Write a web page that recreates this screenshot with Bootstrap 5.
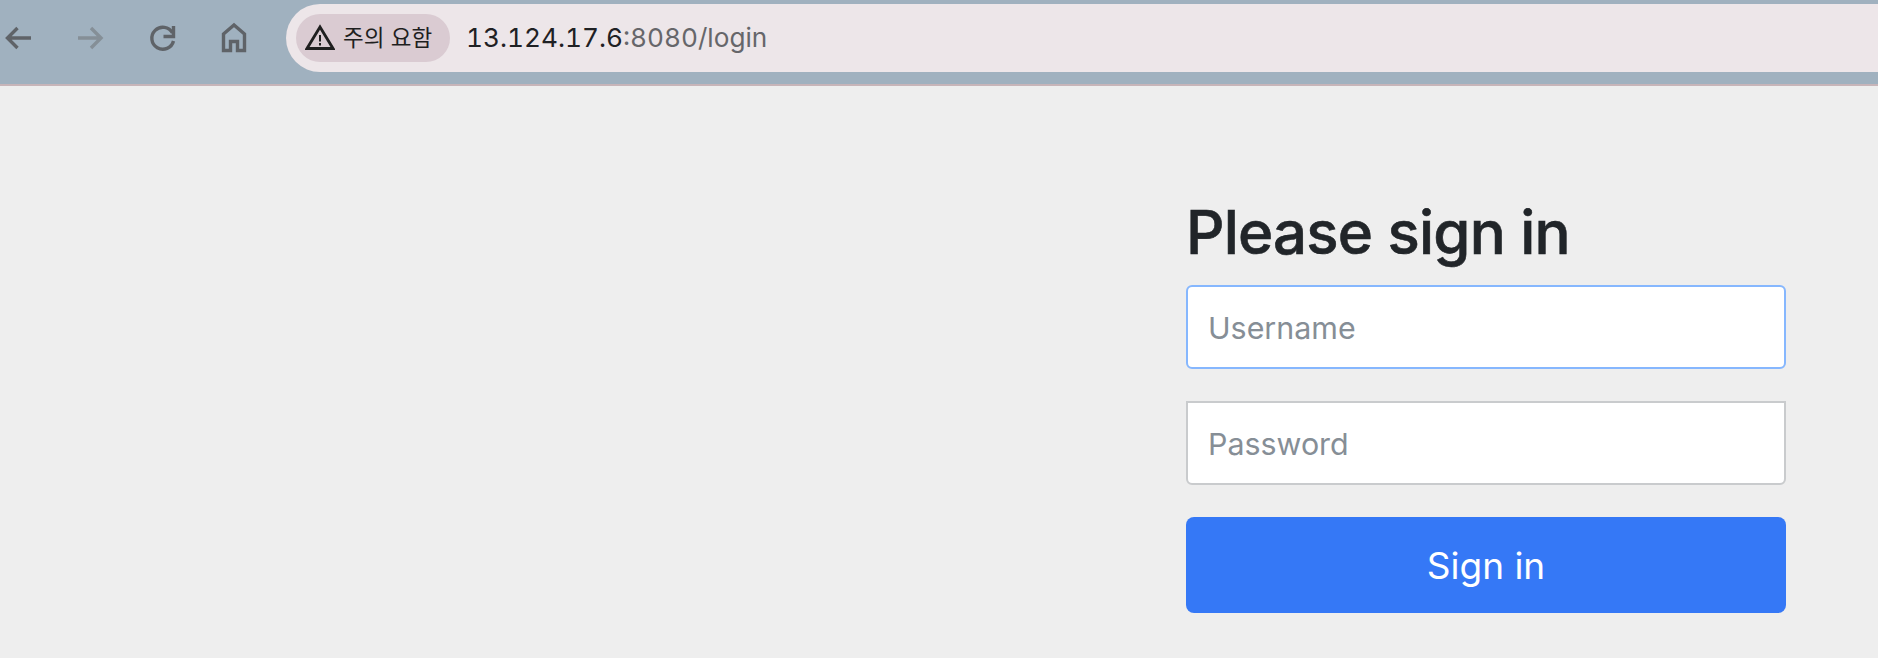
<!DOCTYPE html>
<html lang="ko">
<head>
  <meta charset="UTF-8" />
  <meta name="viewport" content="width=device-width, initial-scale=1" />
  <title>Please sign in</title>
  <link href="https://cdn.jsdelivr.net/npm/bootstrap@5.3.0/dist/css/bootstrap.min.css" rel="stylesheet" />
  <style>
    html, body {
      height: 658px;
      overflow: hidden;
    }

    body {
      background: #eeeeee;
      color: #212529;
      font-family: Inter, "Noto Sans CJK KR", sans-serif;
    }

    .browser-bar {
      height: 86px;
      background: #a0b1bf;
      border-bottom: 2px solid #c7b5b9;
      padding: 4px 0 12px 0;
    }

    .nav-icon {
      width: 32px;
      height: 32px;
      flex: none;
      margin-right: 40px;
      color: #5f6368;
    }

    .nav-icon.is-off {
      color: #858f97;
    }

    .nav-icons {
      padding-left: 3px;
      width: 286px;
      flex: none;
    }

    .address-box {
      background: #ede6e9;
      border-radius: 34px 0 0 34px;
      padding-left: 10px;
    }

    .warn-pill {
      width: 154px;
      height: 48px;
      background: #dacbd2;
      border-radius: 24px;
      padding-left: 9px;
      font-size: 22.5px;
      color: #1f1f1f;
      white-space: nowrap;
    }

    .warn-pill svg {
      flex: none;
      margin-right: 8px;
    }

    .url-text {
      margin-left: 16px;
      font-size: 26.2px;
      font-variant-numeric: tabular-nums;
      color: #66666a;
    }

    .url-host {
      color: #1f2124;
    }

    .login-area {
      padding: 110px 92px 0 0;
    }

    .login-form {
      width: 600px;
    }

    .login-title {
      font-size: 60px;
      font-weight: 500;
      letter-spacing: -0.8px;
      -webkit-text-stroke: 0.6px #212529;
      line-height: 1.2;
      margin: 0 0 17px 0;
    }

    .login-input {
      height: 84px;
      padding: 2px 20px 0 20px;
      font-size: 30.4px;
      border: 2px solid #c9cbcd;
      border-radius: 6px;
      margin-bottom: 32px;
    }

    .login-input.is-active {
      border-color: #86b7fe;
    }

    .login-input.is-lower {
      border-top-left-radius: 0;
      border-top-right-radius: 0;
    }

    .login-input::placeholder {
      color: #868e96;
    }

    .login-btn {
      height: 96px;
      padding-top: 8px;
      font-size: 37px;
      background: #3578f6;
      border: 0;
      border-radius: 8px;
      color: #fff;
    }
  </style>
</head>
<body>
  <div class="browser-bar d-flex">
    <div class="nav-icons d-flex align-items-center">
      <svg class="nav-icon" viewBox="0 0 32 32" fill="none" stroke="currentColor" stroke-width="3.4"><path d="M28 16H5M14.500 6 4.500 16l10 10"/></svg>
      <svg class="nav-icon is-off" viewBox="0 0 32 32" fill="none" stroke="currentColor" stroke-width="3.4"><path d="M3 16h23M16 6l10 10-10 10"/></svg>
      <svg class="nav-icon" viewBox="0 0 32 32" fill="none" stroke="currentColor" stroke-width="3.4"><path d="M25.500 11A11 11 0 1 0 26.500 19"/><path d="M26.500 4v10.500h-10"/></svg>
      <svg class="nav-icon" viewBox="0 0 32 32" fill="none" stroke="currentColor" stroke-width="3.4"><path d="M4.500 28.500V12L15 3l10.500 9v16.500h-7v-9h-7v9z"/></svg>
    </div>
    <div class="address-box flex-grow-1 d-flex align-items-center">
      <div class="warn-pill d-flex align-items-center">
        <svg width="30" height="28" viewBox="0 0 30 28" fill="none" stroke="#1f1f1f"><path d="M15 3 2 24.500h26z" stroke-width="2.800"/><path d="M15 11v6.500M15 19v2.500" stroke-width="2"/></svg>
        <span>주의 요함</span>
      </div>
      <div class="url-text"><span class="url-host">13.124.17.6</span>:8080/login</div>
    </div>
  </div>

  <div class="login-area d-flex justify-content-end">
    <form class="login-form">
      <h2 class="login-title">Please sign in</h2>
      <input class="form-control login-input is-active" type="text" placeholder="Username" />
      <input class="form-control login-input is-lower" type="password" placeholder="Password" />
      <button class="btn btn-primary w-100 login-btn" type="button">Sign in</button>
    </form>
  </div>
</body>
</html>
